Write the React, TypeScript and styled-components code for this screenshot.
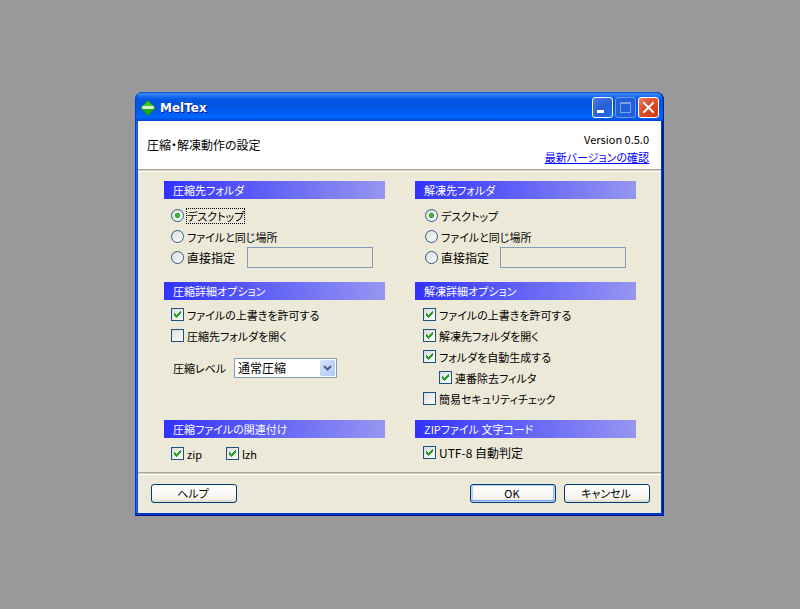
import React from "react";
import styled, { createGlobalStyle, css } from "styled-components";

const GlobalStyle = createGlobalStyle`
  *, *::before, *::after { box-sizing: border-box; }
  body {
    margin: 0;
    background: #999999;
    color: #000;
    font-family: "Noto Sans CJK JP", "Liberation Sans", sans-serif;
    font-feature-settings: "palt";
    font-size: 11px;
    line-height: 18px;
  }
  button, input, select { font: inherit; font-feature-settings: inherit; color: inherit; margin: 0; }
`;

const Desktop = styled.div`
  min-height: 100vh;
  padding: 92px 136px 93px 135px;
`;

const Window = styled.main`
  border-radius: 8px 8px 0 0;
  padding: 0 3px 3px;
  background: linear-gradient(to right, #0831d9 0 1px, #166aee 1px 2px, #0855dd 2px 3px, #0855dd calc(100% - 3px), #0441d8 calc(100% - 3px) calc(100% - 2px), #001ea0 calc(100% - 2px));
  box-shadow: inset 0 -1px 0 #00138c, inset 0 -3px 0 #0036c8;
`;

const TitleBar = styled.header`
  display: flex;
  align-items: center;
  height: 29px;
  margin: 0 -3px;
  padding: 2px 5px 0;
  border-radius: 8px 8px 0 0;
  background: linear-gradient(to bottom, #0a4bce 0, #3b8df5 2px, #1b73f2 4px, #0558e4 7px, #0052df 12px, #005bf0 19px, #0066ff 25px, #0058e8 27px, #0043ce 29px);
  box-shadow: inset 1px 0 0 #0a3fd0, inset -1px 0 0 #00209c;
`;

const Title = styled.h1`
  flex: 1;
  margin: 0 0 0 4px;
  color: #fff;
  font: bold 12px/18px "DejaVu Sans", sans-serif;
  text-shadow: 1px 1px 0 #0a1883;
`;

const Captions = styled.div`
  display: flex;
  gap: 2px;
`;

const CaptionButton = styled.button<{ $kind: "blue" | "faded" | "red" }>`
  display: block;
  width: 21px;
  height: 21px;
  padding: 0;
  border: 1px solid #fff;
  border-radius: 3px;
  background: radial-gradient(circle at 90% 90%, #1c6af0, #2b60d6 50%, #4a7fe8 100%);
  svg { display: block; }
  ${p => p.$kind === "faded" && css`
    border-color: #7397ea;
    background: #2060dd;
  `}
  ${p => p.$kind === "red" && css`
    background: radial-gradient(circle at 85% 90%, #d2400e, #db4b24 55%, #ea8468 100%);
  `}
`;

const Banner = styled.section`
  display: flex;
  justify-content: space-between;
  align-items: center;
  height: 48px;
  padding: 0 12px 0 9px;
  background: #fff;
`;

const Heading = styled.h2`
  margin: 0;
  font-size: 12px;
  font-weight: normal;
`;

const VersionBox = styled.div`
  display: flex;
  flex-direction: column;
  align-items: flex-end;
  padding-top: 6px;
`;

const Link = styled.a`
  color: #0000ff;
  text-decoration: underline;
`;

const Body = styled.div`
  background: #ece9d8;
`;

const Divider = styled.hr`
  height: 3px;
  margin: 0;
  border: 0;
  background: linear-gradient(#aca899 0 1px, #d0cdbd 1px 2px, #fff 2px 3px);
`;

const Groups = styled.div`
  display: grid;
  grid-template-columns: 1fr 1fr;
  column-gap: 30px;
  padding: 9px 25px 8px 26px;
`;

const Group = styled.section<{ $space: number }>`
  min-width: 0;
  padding-bottom: ${p => p.$space}px;
`;

const GroupTitle = styled.h3<{ $gap: number }>`
  height: 18px;
  margin: 0 0 ${p => p.$gap}px;
  padding-left: 9px;
  color: #fff;
  font-size: 11px;
  font-weight: normal;
  background: linear-gradient(to right, #3232ff, #9696f0);
`;

const Row = styled.div<{ $inset: number }>`
  display: flex;
  align-items: center;
  height: 21px;
  padding-left: ${p => p.$inset}px;
`;

const Choice = styled.label<{ $focus?: boolean; $large?: boolean }>`
  display: flex;
  align-items: center;
  gap: 2px;
  font-size: ${p => (p.$large ? 12 : 11)}px;
  white-space: nowrap;
  span {
    line-height: 16px;
    padding: 0 1px;
    ${p => p.$focus && css`outline: 1px dotted #000; outline-offset: -1px;`}
  }
`;

const Tick = styled.input.attrs({ type: "checkbox" })`
  appearance: none;
  flex: none;
  width: 13px;
  height: 13px;
  border: 1px solid #1c5180;
  background: linear-gradient(135deg, #dcdcd7, #fff);
  &:checked {
    background: url("data:image/svg+xml,%3Csvg xmlns='http://www.w3.org/2000/svg' width='11' height='11' shape-rendering='crispEdges'%3E%3Cpath fill='%2321a121' d='M2 4h1v1h1v1h1v-1h1v-1h1v-1h1v-1h1v3h-1v1h-1v1h-1v1h-1v1h-1v-1h-1v-1h-1z'/%3E%3C/svg%3E"), linear-gradient(135deg, #dcdcd7, #fff);
  }
`;

const Radio = styled.input.attrs({ type: "radio" })`
  appearance: none;
  flex: none;
  width: 13px;
  height: 13px;
  border: 1px solid #2a5c88;
  border-radius: 50%;
  background: linear-gradient(135deg, #dcdcd7, #fff);
  &:checked {
    background: radial-gradient(circle at 50% 50%, #4bc94b 0, #21a121 2px, transparent 3px), linear-gradient(135deg, #dcdcd7, #fff);
  }
`;

const PathInput = styled.input.attrs({ type: "text" })<{ $edge: number }>`
  width: 126px;
  min-width: 0;
  height: 21px;
  margin-left: auto;
  margin-right: ${p => p.$edge}px;
  padding: 0 3px;
  border: 1px solid #7f9db9;
  border-radius: 0;
  background: #ece9d8;
`;

const LevelRow = styled.div`
  display: flex;
  align-items: center;
  gap: 8px;
  margin-top: 12px;
  padding-left: 9px;
`;

const LevelLabel = styled.label`
  width: 53px;
  white-space: nowrap;
`;

const Level = styled.select`
  appearance: none;
  width: 103px;
  height: 20px;
  padding: 0 18px 0 3px;
  border: 1px solid #7f9db9;
  border-radius: 0;
  font-size: 12px;
  line-height: 18px;
  background:
    url("data:image/svg+xml,%3Csvg xmlns='http://www.w3.org/2000/svg' width='15' height='16'%3E%3Cdefs%3E%3ClinearGradient id='g' x2='1' y2='1'%3E%3Cstop stop-color='%23d7e2fe'/%3E%3Cstop offset='1' stop-color='%23aec8f7'/%3E%3C/linearGradient%3E%3C/defs%3E%3Crect width='15' height='16' rx='1' fill='url(%23g)'/%3E%3Cpath d='M4 6l3.5 3.5L11 6' fill='none' stroke='%234d6185' stroke-width='2'/%3E%3C/svg%3E") right 1px center no-repeat #fff;
`;

const Associations = styled.div`
  display: grid;
  grid-template-columns: 55px 55px;
`;

const Footer = styled.footer`
  display: flex;
  justify-content: space-between;
  padding: 9px 11px 10px 13px;
`;

const Actions = styled.div`
  display: flex;
  gap: 8px;
`;

const PushButton = styled.button<{ $default?: boolean }>`
  width: 86px;
  height: 19px;
  padding: 0 2px 1px 0;
  border: 1px solid #003c74;
  border-radius: 3px;
  line-height: 16px;
  background: linear-gradient(#fff, #f4f3ee 80%, #dcd8cc);
  ${p => p.$default && css`
    box-shadow: inset 0 0 0 1px #bcd0f5, inset 0 -2px 0 #7e9fe6, inset 2px 0 0 #bcd0f5, inset -2px 0 0 #9db9ee;
  `}
`;

const AppIcon = () => (
  <svg width="16" height="16" viewBox="0 0 16 16" aria-hidden="true">
    <path d="M8 0L16 8L8 16L0 8Z" fill="#168c14" />
    <path d="M8 1L14 7L8 8L2 7Z" fill="#43c52c" />
    <path d="M8 9L14 9L8 15L2 9Z" fill="#20aa18" />
    <rect x="2" y="6" width="12" height="3" rx="1" fill="#d4f2ca" />
  </svg>
);

const CaptionGlyph = ({ kind }: { kind: "min" | "max" | "close" }) => (
  <svg width="19" height="19" viewBox="0 0 19 19" shapeRendering={kind === "close" ? "auto" : "crispEdges"} aria-hidden="true">
    {kind === "min" && <rect x="4" y="12" width="7" height="3" fill="#fff" />}
    {kind === "max" && <path d="M4 4h11v11h-11zM5 6v8h9v-8z" fill="#7d9fee" fillRule="evenodd" />}
    {kind === "close" && <path d="M5 5L14 14M14 5L5 14" stroke="#fff" strokeWidth="2" strokeLinecap="square" />}
  </svg>
);

type DestinationProps = { title: string; name: string; inset: number; edge: number; focus?: boolean };

const Destination = ({ title, name, inset, edge, focus }: DestinationProps) => (
  <Group $space={14}>
    <GroupTitle $gap={6}>{title}</GroupTitle>
    <Row $inset={inset}>
      <Choice $focus={focus}><Radio name={name} defaultChecked /><span>デスクトップ</span></Choice>
    </Row>
    <Row $inset={inset}>
      <Choice><Radio name={name} /><span>ファイルと同じ場所</span></Choice>
    </Row>
    <Row $inset={inset}>
      <Choice $large><Radio name={name} /><span>直接指定</span></Choice>
      <PathInput $edge={edge} disabled aria-label={title} />
    </Row>
  </Group>
);

type OptionProps = { label: string; inset: number; checked?: boolean; large?: boolean };

const Option = ({ label, inset, checked, large }: OptionProps) => (
  <Row $inset={inset}>
    <Choice $large={large}><Tick defaultChecked={checked} /><span>{label}</span></Choice>
  </Row>
);

export default function App() {
  return (
    <>
      <GlobalStyle />
      <Desktop>
        <Window>
          <TitleBar>
            <AppIcon />
            <Title>MelTex</Title>
            <Captions>
              <CaptionButton $kind="blue" aria-label="最小化"><CaptionGlyph kind="min" /></CaptionButton>
              <CaptionButton $kind="faded" aria-label="最大化" disabled><CaptionGlyph kind="max" /></CaptionButton>
              <CaptionButton $kind="red" aria-label="閉じる"><CaptionGlyph kind="close" /></CaptionButton>
            </Captions>
          </TitleBar>
          <Banner>
            <Heading>圧縮・解凍動作の設定</Heading>
            <VersionBox>
              <span>Version 0.5.0</span>
              <Link href="#update">最新バージョンの確認</Link>
            </VersionBox>
          </Banner>
          <Body>
            <Divider />
            <Groups>
              <Destination title="圧縮先フォルダ" name="compress" inset={7} edge={12} focus />
              <Destination title="解凍先フォルダ" name="extract" inset={10} edge={10} />
              <Group $space={0}>
                <GroupTitle $gap={4}>圧縮詳細オプション</GroupTitle>
                <Option label="ファイルの上書きを許可する" inset={7} checked />
                <Option label="圧縮先フォルダを開く" inset={7} />
                <LevelRow>
                  <LevelLabel htmlFor="level">圧縮レベル</LevelLabel>
                  <Level id="level"><option>通常圧縮</option></Level>
                </LevelRow>
              </Group>
              <Group $space={11}>
                <GroupTitle $gap={4}>解凍詳細オプション</GroupTitle>
                <Option label="ファイルの上書きを許可する" inset={8} checked />
                <Option label="解凍先フォルダを開く" inset={8} checked />
                <Option label="フォルダを自動生成する" inset={8} checked />
                <Option label="連番除去フィルタ" inset={24} checked />
                <Option label="簡易セキュリティチェック" inset={8} />
              </Group>
              <Group $space={0}>
                <GroupTitle $gap={5}>圧縮ファイルの関連付け</GroupTitle>
                <Associations>
                  <Option label="zip" inset={7} checked />
                  <Option label="lzh" inset={7} checked />
                </Associations>
              </Group>
              <Group $space={0}>
                <GroupTitle $gap={4}>ZIPファイル 文字コード</GroupTitle>
                <Option label="UTF-8 自動判定" inset={8} checked large />
              </Group>
            </Groups>
            <Divider />
            <Footer>
              <PushButton>ヘルプ</PushButton>
              <Actions>
                <PushButton $default>OK</PushButton>
                <PushButton>キャンセル</PushButton>
              </Actions>
            </Footer>
          </Body>
        </Window>
      </Desktop>
    </>
  );
}
